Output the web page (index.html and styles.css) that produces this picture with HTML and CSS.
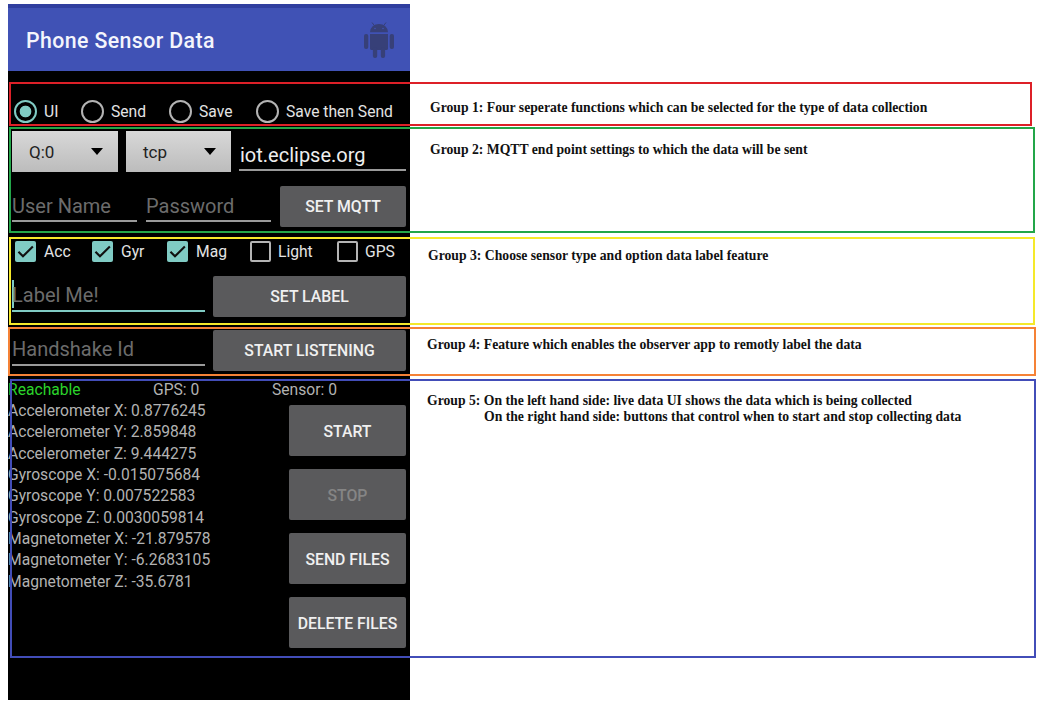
FILE: index.html
```html
<!DOCTYPE html>
<html lang="en">
<head>
<meta charset="utf-8">
<title>Phone Sensor Data</title>
<link rel="stylesheet" href="styles.css">
</head>
<body>
<main class="phone">
  <header class="appbar">
    <h1 class="title">Phone Sensor Data</h1>
    <svg class="robot" viewBox="0 0 30 36"><path d="M6 10.200a9 8.300 0 0 1 18 0zM6 12h18v14.500a1.600 1.600 0 0 1-1.600 1.600h-14.800a1.600 1.600 0 0 1-1.600-1.600z"/><rect x="0" y="12" width="4.300" height="15" rx="2"/><rect x="25.700" y="12" width="4.300" height="15" rx="2"/><rect x="8.900" y="25" width="4.300" height="11" rx="2"/><rect x="16.800" y="25" width="4.300" height="11" rx="2"/><path class="antenna" d="M8 .5l2.500 3.300M22 .5l-2.500 3.300"/><circle class="eye" cx="11" cy="6.500" r=".8"/><circle class="eye" cx="19" cy="6.500" r=".8"/></svg>
  </header>
  <div class="radios">
    <span class="radio on"></span><span>UI</span>
    <span class="radio"></span><span>Send</span>
    <span class="radio"></span><span>Save</span>
    <span class="radio"></span><span>Save then Send</span>
  </div>
  <div class="endpoint">
    <div class="spinner"><span>Q:0</span><i class="caret"></i></div>
    <div class="spinner"><span>tcp</span><i class="caret"></i></div>
    <div class="field host">iot.eclipse.org</div>
  </div>
  <div class="login">
    <div class="field hint">User Name</div>
    <div class="field hint">Password</div>
    <div class="button">SET MQTT</div>
  </div>
  <div class="checks">
    <svg class="box on" viewBox="0 0 20 20"><path d="M3.300 10.300l4.300 4.300 9.400-9.400"/></svg><span>Acc</span>
    <svg class="box on" viewBox="0 0 20 20"><path d="M3.300 10.300l4.300 4.300 9.400-9.400"/></svg><span>Gyr</span>
    <svg class="box on" viewBox="0 0 20 20"><path d="M3.300 10.300l4.300 4.300 9.400-9.400"/></svg><span>Mag</span>
    <span class="box"></span><span>Light</span>
    <span class="box"></span><span>GPS</span>
  </div>
  <div class="pair label-row">
    <div class="field hint focus">Label Me!</div>
    <div class="button">SET LABEL</div>
  </div>
  <div class="pair">
    <div class="field hint">Handshake Id</div>
    <div class="button">START LISTENING</div>
  </div>
  <div class="status"><span class="ok">Reachable</span><span>GPS: 0</span><span>Sensor: 0</span></div>
  <div class="live">
    <div class="readings">
      <div>Accelerometer X: 0.8776245</div>
      <div>Accelerometer Y: 2.859848</div>
      <div>Accelerometer Z: 9.444275</div>
      <div>Gyroscope X: -0.015075684</div>
      <div>Gyroscope Y: 0.007522583</div>
      <div>Gyroscope Z: 0.0030059814</div>
      <div>Magnetometer X: -21.879578</div>
      <div>Magnetometer Y: -6.2683105</div>
      <div>Magnetometer Z: -35.6781</div>
    </div>
    <div class="actions">
      <div class="button">START</div>
      <div class="button disabled">STOP</div>
      <div class="button">SEND FILES</div>
      <div class="button">DELETE FILES</div>
    </div>
  </div>
</main>
<section class="group g1"><p>Group 1: Four seperate functions which can be selected for the type of data collection</p></section>
<section class="group g2"><p>Group 2: MQTT end point settings to which the data will be sent</p></section>
<section class="group g3"><p>Group 3: Choose sensor type and option data label feature</p></section>
<section class="group g4"><p>Group 4: Feature which enables the observer app to remotly label the data</p></section>
<section class="group g5"><p>Group 5: On the left hand side: live data UI shows the data which is being collected</p><p class="second">On the right hand side: buttons that control when to start and stop collecting data</p></section>
</body>
</html>
```
FILE: styles.css
```css
* { box-sizing: border-box; }
body {
  margin: 0;
  width: 1042px;
  height: 706px;
  padding: 4px 0 0 8px;
  position: relative;
  overflow: hidden;
  background: #fff;
}
.phone {
  width: 402px;
  height: 696px;
  background: #000;
  color: #e4e4e4;
  font: 15.650px/20px Roboto, sans-serif;
  white-space: nowrap;
}
.appbar {
  height: 67px;
  border-top: 4px solid #303f9f;
  background: #4052b5;
  display: flex;
  align-items: center;
  justify-content: space-between;
  padding: 0 16px 0 18px;
}
.title {
  margin: 0;
  padding-top: 3px;
  font-size: 21.300px;
  font-weight: 500;
  letter-spacing: 0.400px;
  color: #f4f5fc;
}
.robot { width: 30px; height: 36px; fill: #374078; }
.antenna { stroke: #374078; stroke-width: 1; }
.eye { fill: #4052b5; }
.radios {
  margin-top: 29px;
  height: 22px;
  padding-left: 6px;
  display: grid;
  grid-template-columns: 30px 37px 30px 58px 30px 57px 30px 1fr;
  align-items: center;
}
.radio {
  width: 23px;
  height: 23px;
  border: 2px solid #b4b4b4;
  border-radius: 50%;
}
.radio.on {
  border-color: #80cbc4;
  background: radial-gradient(circle, #80cbc4 5.500px, #000 6.200px);
}
.endpoint {
  margin-top: 9px;
  padding: 0 4px;
  height: 41px;
  display: grid;
  grid-template-columns: 106px 105px 167px;
  column-gap: 8px;
}
.spinner {
  height: 41px;
  padding: 0 15px 0 17px;
  display: flex;
  align-items: center;
  justify-content: space-between;
  background: linear-gradient(#d8d8d8, #bcbcbc);
  color: #222;
  font-size: 17px;
}
.caret {
  border: 6.500px solid transparent;
  border-top: 7px solid #000;
  border-bottom: 0;
}
.field {
  border-bottom: 2px solid #9a9a9a;
  font-size: 20px;
  line-height: 24px;
  height: 36px;
}
.host { margin-top: 4px; padding: 8px 0 0 1px; color: #eee; }
.hint { color: #6c6c6c; }
.login {
  margin-top: 14px;
  padding: 0 4px;
  height: 41px;
  display: grid;
  grid-template-columns: 125px 125px 126px;
  column-gap: 9px;
}
.login .field { padding-top: 8px; }
.button {
  height: 41px;
  padding-top: 1px;
  display: flex;
  align-items: center;
  justify-content: center;
  background: #5a5a5c;
  border-radius: 2px;
  font-size: 15.800px;
  font-weight: 500;
  color: #f0f0f0;
}
.checks {
  margin-top: 14px;
  padding: 0 0 0 7px;
  height: 21px;
  display: grid;
  grid-template-columns: 29px 48px 29px 46px 29px 54px 28px 59px 28px 1fr;
  align-items: center;
}
.checks span:not(.box) { padding-top: 1px; }
.box { width: 21px; height: 21px; border: 2px solid #b4b4b4; border-radius: 2px; }
.box.on { border: 0; background: #80cbc4; fill: none; stroke: #111; stroke-width: 2; }
.pair {
  margin-top: 13px;
  padding: 0 4px;
  height: 41px;
  display: grid;
  grid-template-columns: 193px 193px;
  column-gap: 8px;
}
.label-row { margin-top: 14px; }
.pair .field { padding-top: 7px; }
.focus { border-color: #80cbc4; background: linear-gradient(#80cbc4, #80cbc4) 0 4px / 2px 28px no-repeat; }
.status {
  margin-top: 8px;
  height: 21px;
  display: grid;
  grid-template-columns: 145px 119px 1fr;
  line-height: 21px;
  color: #b2b2b2;
}
.ok { color: #2bd32b; }
.live { display: flex; justify-content: space-between; padding-right: 4px; color: #b2b2b2; }
.readings { line-height: 21.330px; }
.actions { width: 117px; padding-top: 5px; display: grid; gap: 13px; }
.actions .button { height: 51px; padding-top: 2px; }
.actions .disabled { color: #858585; }
.group {
  position: absolute;
  border: 2px solid;
  font: bold 13.700px/16px "Liberation Serif", serif;
  white-space: nowrap;
}
.group p { margin: 0; color: #111; }
.g1 { left: 9px; top: 82px; width: 1023px; height: 44px; border-color: #dd2028; padding: 16px 0 0 419px; }
.g2 { left: 9px; top: 127px; width: 1026px; height: 106px; border-color: #23a649; padding: 13px 0 0 419px; }
.g3 { left: 9px; top: 237px; width: 1026px; height: 88px; border-color: #f5e92a; padding: 9px 0 0 417px; }
.g4 { left: 8px; top: 327px; width: 1028px; height: 49px; border-color: #f58236; padding: 8px 0 0 417px; }
.g5 { left: 10px; top: 379px; width: 1026px; height: 279px; border-color: #424db8; padding: 12px 0 0 415px; }
.second { padding-left: 57px; }
```
